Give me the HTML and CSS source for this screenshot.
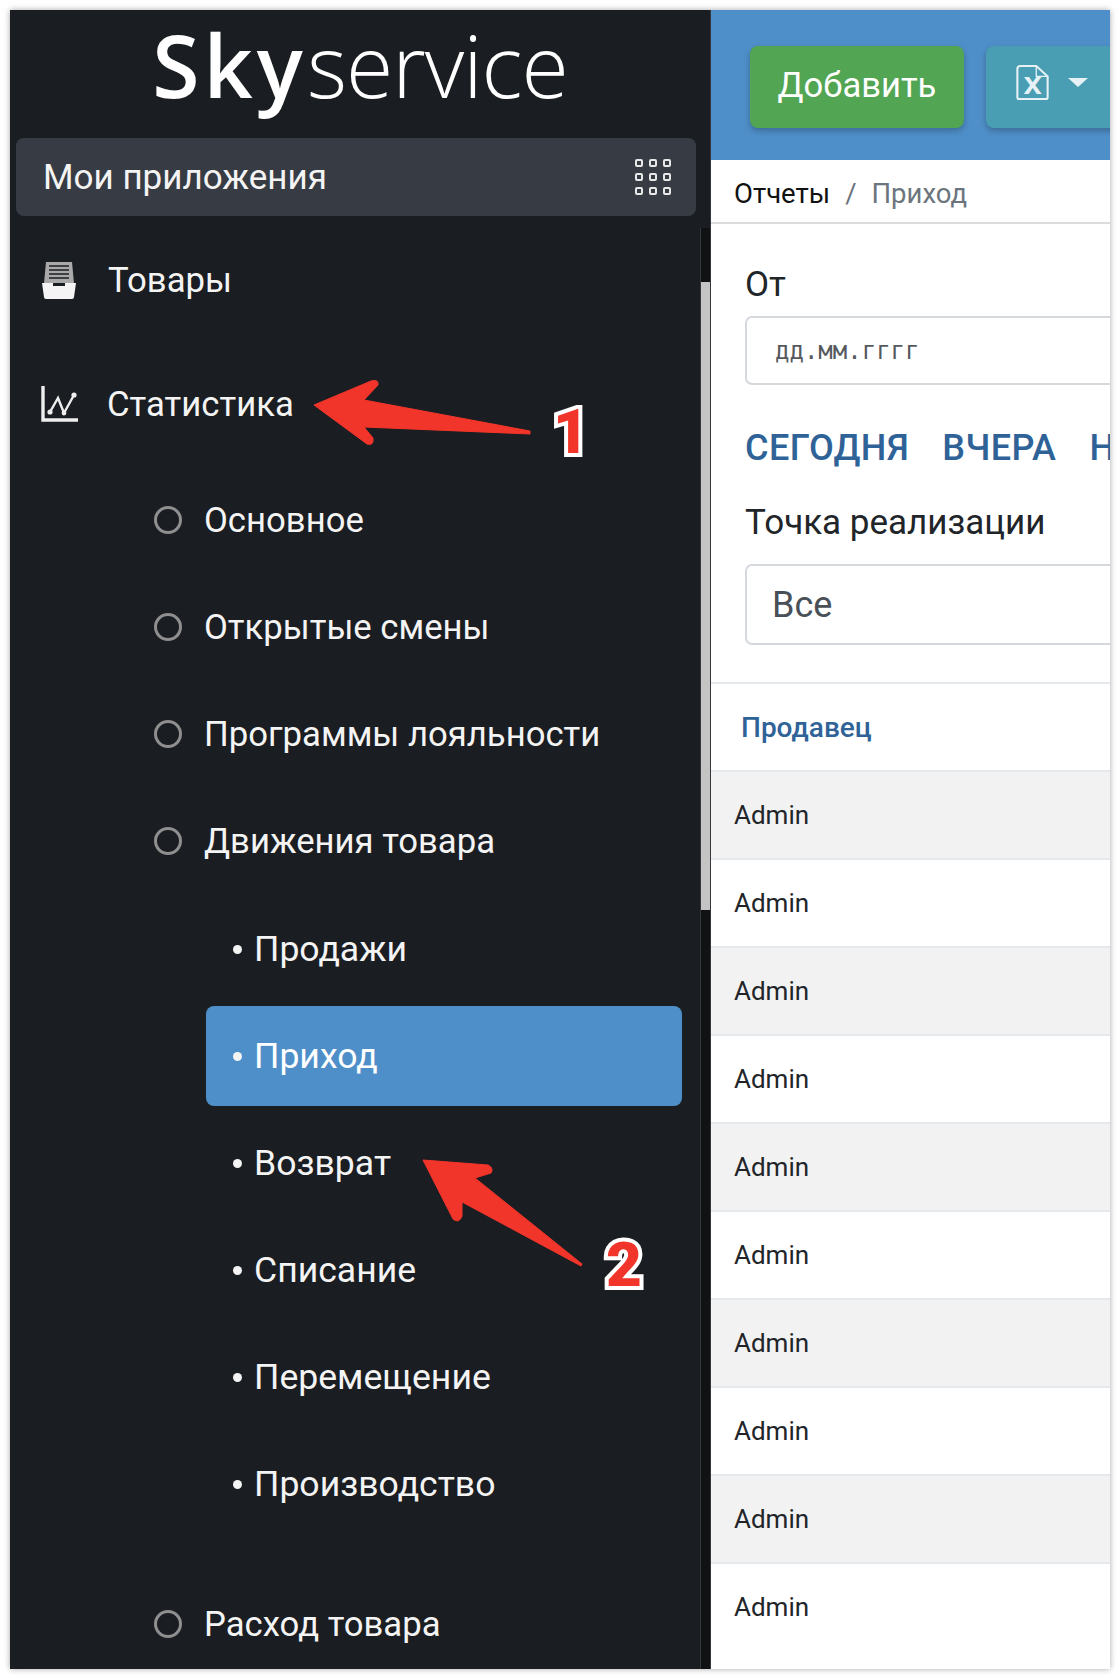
FILE: index.html
```html
<!DOCTYPE html>
<html lang="ru">

<head>
  <meta charset="UTF-8">
  <title>Skyservice - Приход</title>
  <link rel="stylesheet" href="styles.css">
</head>

<body>
  <div class="window">
    <aside class="sidebar">
      <div class="logo"><b>Sky</b>service</div>
      <div class="apps_bar">
        <span>Мои приложения</span>
        <svg class="apps_icon" width="36" height="36" viewBox="0 0 36 36" fill="none" stroke="#e8e8e8" stroke-width="2">
          <rect x="1" y="1" width="6" height="6" rx="1" />
          <rect x="15" y="1" width="6" height="6" rx="1" />
          <rect x="29" y="1" width="6" height="6" rx="1" />
          <rect x="1" y="15" width="6" height="6" rx="1" />
          <rect x="15" y="15" width="6" height="6" rx="1" />
          <rect x="29" y="15" width="6" height="6" rx="1" />
          <rect x="1" y="29" width="6" height="6" rx="1" />
          <rect x="15" y="29" width="6" height="6" rx="1" />
          <rect x="29" y="29" width="6" height="6" rx="1" />
        </svg>
      </div>
      <div class="nav_wrap">
        <ul class="nav">
          <li class="nav_top goods">
            <svg width="36" height="38" viewBox="0 0 36 38">
              <path d="M5 1h26l2 21H3z" fill="#a9a9a9" />
              <path d="M8 5h20M8 9h20M8 13h20M8 17h20" stroke="#1a1d21" stroke-width="1.6" />
              <path d="M1 22h11v3h12v-3h11l-2 14a2 2 0 0 1-2 2H5a2 2 0 0 1-2-2z" fill="#f4f4f4" />
            </svg>
            <span>Товары</span>
          </li>
          <li class="nav_top stats">
            <svg width="38" height="37" viewBox="0 0 38 37" fill="none" stroke="#eee">
              <path d="M3 0v34h35" stroke-width="3.4" />
              <path d="M10 26l8-14 6 15 10-18" stroke-width="2.4" />
              <circle cx="10" cy="26" r="2.6" fill="#eee" stroke="none" />
              <circle cx="24" cy="27" r="2.4" fill="#eee" stroke="none" />
              <circle cx="34" cy="9" r="2.6" fill="#eee" stroke="none" />
            </svg>
            <span>Статистика</span>
          </li>
          <li class="nav_group first"><i class="ring"></i>Основное</li>
          <li class="nav_group"><i class="ring"></i>Открытые смены</li>
          <li class="nav_group"><i class="ring"></i>Программы лояльности</li>
          <li class="nav_group"><i class="ring"></i>Движения товара</li>
          <li class="nav_sub"><i class="dot"></i>Продажи</li>
          <li class="nav_sub active"><i class="dot"></i>Приход</li>
          <li class="nav_sub"><i class="dot"></i>Возврат</li>
          <li class="nav_sub"><i class="dot"></i>Списание</li>
          <li class="nav_sub"><i class="dot"></i>Перемещение</li>
          <li class="nav_sub"><i class="dot"></i>Производство</li>
          <li class="nav_group last"><i class="ring"></i>Расход товара</li>
        </ul>
        <div class="scrollbar"><div class="scroll_thumb"></div></div>
      </div>
    </aside>

    <main class="content">
      <div class="toolbar">
        <button class="btn btn_add">Добавить</button>
        <button class="btn btn_excel">
          <svg class="excel_icon" width="33" height="35" viewBox="0 0 34 37" fill="none" stroke="#e6f2f5" stroke-width="2.2">
            <path d="M4 1h17l12 11v22a2 2 0 0 1-2 2H3a2 2 0 0 1-2-2V4a3 3 0 0 1 3-3z" />
            <path d="M21 1v11h12" stroke-width="1.4" />
            <text x="7" y="31" class="excel_x">x</text>
          </svg>
          <i class="caret"></i>
        </button>
      </div>
      <div class="breadcrumb"><span class="crumb">Отчеты</span><span class="crumb_sep">/</span><span class="crumb_now">Приход</span></div>
      <div class="filters">
        <label class="field_label">От</label>
        <div class="date_input">дд.мм.гггг</div>
        <div class="ranges">
          <a>СЕГОДНЯ</a>
          <a>ВЧЕРА</a>
          <a>НЕДЕЛЯ</a>
        </div>
        <label class="field_label point_label">Точка реализации</label>
        <div class="select_input">Все</div>
      </div>
      <div class="table_head">Продавец</div>
      <div class="row odd">Admin</div>
      <div class="row">Admin</div>
      <div class="row odd">Admin</div>
      <div class="row">Admin</div>
      <div class="row odd">Admin</div>
      <div class="row">Admin</div>
      <div class="row odd">Admin</div>
      <div class="row">Admin</div>
      <div class="row odd">Admin</div>
      <div class="row">Admin</div>
    </main>

    <!-- annotations on top of the screenshot -->
    <svg class="arrows" width="1100" height="1659" viewBox="10 10 1100 1659">
      <path d="M314 405L371 381Q379 379 378 385L364 400L530 431V434L364 427L373 438Q374 446 367 444Z" fill="#f2352a" stroke="#f2352a" stroke-linejoin="round" />
      <path d="M423 1160L488 1165Q494 1168 491 1173L475 1178L582 1264L581 1266L462 1202L462 1216Q459 1224 453 1219Z" fill="#f2352a" stroke="#f2352a" stroke-linejoin="round" />
    </svg>
    <span class="mark mark_one">1</span>
    <span class="mark mark_two">2</span>
  </div>
</body>

</html>
```
FILE: styles.css
```css
* {
  box-sizing: border-box;
}

body {
  margin: 0;
  padding: 10px 10px 9px 10px;
  height: 1678px;
  background: white;
  font-family: 'Roboto', 'Liberation Sans', sans-serif;
}

ul {
  list-style: none;
  margin: 0;
  padding: 0;
}

.window {
  position: relative;
  display: flex;
  width: 1100px;
  height: 1659px;
  box-shadow: 0 0 6px rgba(0, 0, 0, 0.35);
}

.sidebar {
  width: 701px;
  height: 1659px;
  background-color: #1a1d21;
  color: #f4f4f4;
  border-right: 1px solid #34373b;
  flex-shrink: 0;
}

.logo {
  height: 128px;
  text-align: center;
  font-family: 'Open Sans', sans-serif;
  font-size: 86px;
  font-weight: 300;
  line-height: 110px;
  letter-spacing: -1px;
  color: white;
}

.logo b {
  font-weight: 600;
  letter-spacing: 4px;
}

.apps_bar {
  display: flex;
  justify-content: space-between;
  align-items: center;
  height: 78px;
  margin: 0 14px 0 6px;
  padding: 0 25px 0 27px;
  background-color: #373b43;
  border-radius: 8px;
  font-size: 35px;
}

.nav_wrap {
  display: flex;
  height: 1453px;
}

.nav {
  flex: 1;
}

.nav li {
  display: flex;
  align-items: center;
  font-size: 34.7px;
}

.nav_top {
  height: 124px;
  padding-left: 30px;
}

.nav_top span {
  margin-left: 29px;
}

.goods {
  margin-top: 2px;
  padding-left: 31px;
}

.goods span {
  margin-left: 31px;
}

.nav_group {
  height: 107px;
  padding-left: 144px;
}

.nav_group.last {
  margin-top: 36px;
}

.ring {
  width: 28px;
  height: 28px;
  margin-right: 22px;
  border: 3px solid #8f8f8f;
  border-radius: 50%;
}

.nav li.nav_sub {
  height: 100px;
  margin: 0 18px 7px 196px;
  padding-left: 27px;
  border-radius: 8px;
  font-size: 35.6px;
}

.nav li.nav_group + .nav_sub {
  margin-top: 5px;
}

.nav_sub.active {
  background-color: #4f8fc9;
  color: white;
}

.dot {
  width: 9px;
  height: 9px;
  margin-right: 12px;
  background-color: #f4f4f4;
  border-radius: 50%;
}

.scrollbar {
  width: 10px;
  margin-top: 12px;
  background-color: #101214;
  border-left: 1px solid #34373b;
}

.scroll_thumb {
  height: 628px;
  margin-top: 54px;
  background-color: #c4c4c4;
}

.content {
  flex: 1;
  min-width: 0;
  background: white;
  overflow: hidden;
  white-space: nowrap;
  color: #212529;
}

.toolbar {
  display: flex;
  gap: 22px;
  height: 150px;
  padding: 36px 0 0 39px;
  background-color: #4f8fc9;
}

.btn {
  display: flex;
  align-items: center;
  flex-shrink: 0;
  height: 82px;
  border: 0;
  border-radius: 8px;
  color: white;
  font-family: inherit;
  font-size: 34.6px;
  box-shadow: 0 3px 6px rgba(0, 0, 0, 0.25);
}

.btn_add {
  width: 214px;
  justify-content: center;
  padding: 0 0 4px;
  background-color: #52a552;
}

.btn_excel {
  width: 200px;
  padding: 0 0 10px 30px;
  background-color: #4a9eb3;
}

.excel_icon {
  overflow: visible;
}

.excel_x {
  font-family: 'Liberation Mono', monospace;
  font-size: 34px;
  font-weight: 700;
  fill: #e6f2f5;
  stroke: none;
}

.caret {
  margin-left: 19px;
  border-top: 9px solid #e6f2f5;
  border-left: 10px solid transparent;
  border-right: 10px solid transparent;
}

.breadcrumb {
  display: flex;
  align-items: center;
  height: 64px;
  padding: 4px 0 0 23px;
  border-bottom: 2px solid #dcdcdc;
  font-size: 27.5px;
}

.crumb {
  color: #111;
}

.crumb_sep {
  margin: 0 15px;
  color: #6c757d;
}

.crumb_now {
  color: #6c757d;
}

.filters {
  height: 460px;
  padding: 41px 0 0 34px;
  border-bottom: 2px solid #e5e8ec;
}

.field_label {
  display: block;
  font-size: 35px;
  line-height: 40px;
}

.date_input {
  display: flex;
  align-items: center;
  width: 500px;
  height: 69px;
  margin-top: 11px;
  padding-left: 28px;
  border: 2px solid #d5d9de;
  border-radius: 7px;
  font-family: 'DejaVu Sans Mono', monospace;
  font-size: 24px;
  color: #55595e;
}

.ranges {
  display: flex;
  gap: 33px;
  margin-top: 43px;
  font-size: 36px;
  line-height: 40px;
  font-weight: 500;
  letter-spacing: 0.4px;
  color: #2f6398;
}

.point_label {
  margin-top: 35px;
}

.select_input {
  display: flex;
  align-items: center;
  width: 500px;
  height: 81px;
  margin-top: 21px;
  padding-left: 25px;
  border: 2px solid #d5d9de;
  border-radius: 7px;
  font-size: 36px;
  color: #495057;
}

.table_head {
  display: flex;
  align-items: center;
  height: 86px;
  padding-left: 30px;
  font-size: 28px;
  font-weight: 500;
  color: #2f6398;
}

.row {
  display: flex;
  align-items: center;
  height: 88px;
  padding-left: 23px;
  border-top: 2px solid #e5e8ec;
  font-size: 26px;
}

.row.odd {
  background-color: #f2f2f2;
}

.arrows {
  position: absolute;
  top: 0;
  left: 0;
}

.mark {
  position: absolute;
  font-family: 'Roboto', sans-serif;
  font-weight: 900;
  font-size: 62px;
  line-height: 62px;
  color: #f2352a;
  -webkit-text-stroke: 8px white;
  paint-order: stroke fill;
}

.mark_one {
  left: 543px;
  top: 391px;
}

.mark_two {
  left: 596px;
  top: 1224px;
}
```
